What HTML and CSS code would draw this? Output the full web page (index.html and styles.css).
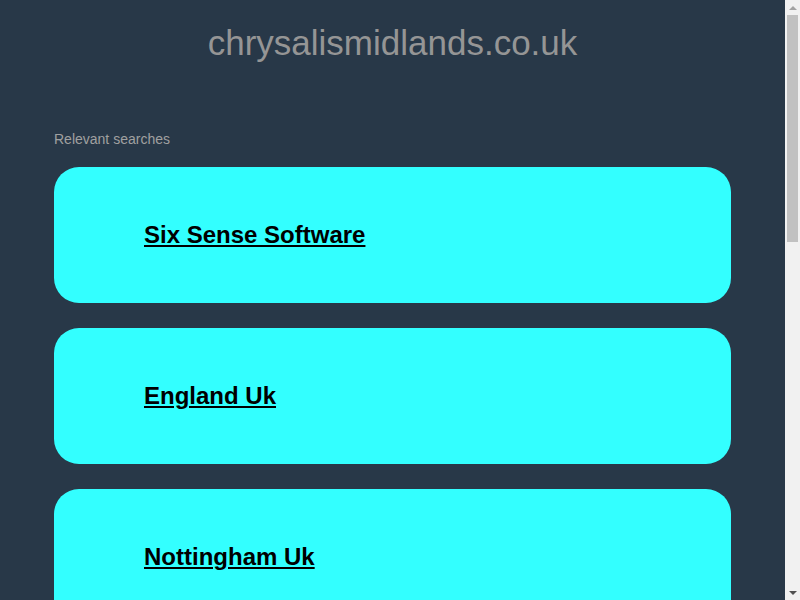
FILE: index.html
```html
<!DOCTYPE html>
<html lang="en">
<head>
<meta charset="utf-8">
<title>chrysalismidlands.co.uk</title>
<link rel="stylesheet" href="styles.css">
</head>
<body>
<div class="window">
  <div class="viewport">
    <div class="page">
      <header class="header">
        <h1 class="domain">chrysalismidlands.co.uk</h1>
      </header>
      <main class="content">
        <p class="label">Relevant searches</p>
        <ul class="links">
          <li class="card"><a class="card-link" href="#">Six Sense Software</a></li>
          <li class="card"><a class="card-link" href="#">England Uk</a></li>
          <li class="card"><a class="card-link" href="#">Nottingham Uk</a></li>
          <li class="card"><a class="card-link" href="#">Midlands Uk</a></li>
          <li class="card"><a class="card-link" href="#">Software Development</a></li>
        </ul>
      </main>
      <footer class="footer">
        <p class="footer-text">Privacy Policy</p>
      </footer>
    </div>
  </div>
  <div class="scrollbar" aria-hidden="true">
    <div class="sb-button"><span class="sb-arrow-up"></span></div>
    <div class="sb-track"><div class="sb-thumb"></div></div>
    <div class="sb-button"><span class="sb-arrow-down"></span></div>
  </div>
</div>
</body>
</html>
```

FILE: styles.css
```css
html, body {
  margin: 0;
  padding: 0;
  height: 100%;
  overflow: hidden;
  background: #283848;
}
body {
  font-family: "Liberation Sans", Arial, sans-serif;
}
.window {
  display: flex;
  height: 100%;
}
.viewport {
  flex: 1;
  min-width: 0;
  overflow: hidden;
}
.page {
  min-height: 1507px;
  display: flex;
  flex-direction: column;
}
.header {
  padding-top: 22px;
  text-align: center;
}
.domain {
  margin: 0;
  font-size: 35px;
  font-weight: normal;
  line-height: 42px;
  color: #959595;
}
.content {
  padding: 0 54px;
  margin-top: 66px;
}
.label {
  margin: 0;
  font-size: 14px;
  line-height: 18px;
  color: #a0a0a0;
}
.links {
  list-style: none;
  margin: 19px 0 0;
  padding: 0;
  display: flex;
  flex-direction: column;
  gap: 25px;
}
.card {
  height: 136px;
  background: #33ffff;
  border-radius: 25px;
  display: flex;
  align-items: center;
  padding-left: 90px;
}
.card-link {
  font-size: 24px;
  font-weight: bold;
  color: #000;
  text-decoration: underline;
}
.footer {
  margin-top: auto;
  padding: 30px 54px;
  text-align: center;
}
.footer-text {
  margin: 0;
  font-size: 12px;
  color: #8a8a8a;
}

/* scrollbar */
.scrollbar {
  width: 15px;
  flex: none;
  background: #f1f1f1;
  display: flex;
  flex-direction: column;
}
.sb-button {
  height: 15px;
  display: flex;
  align-items: center;
  justify-content: center;
}
.sb-arrow-up {
  width: 0;
  height: 0;
  border-left: 4px solid transparent;
  border-right: 4px solid transparent;
  border-bottom: 4px solid #a3a3a3;
}
.sb-arrow-down {
  width: 0;
  height: 0;
  border-left: 4px solid transparent;
  border-right: 4px solid transparent;
  border-top: 4px solid #505050;
}
.sb-track {
  flex: 1;
  padding: 0 2px;
}
.sb-thumb {
  height: 227px;
  background: #c1c1c1;
}
```
